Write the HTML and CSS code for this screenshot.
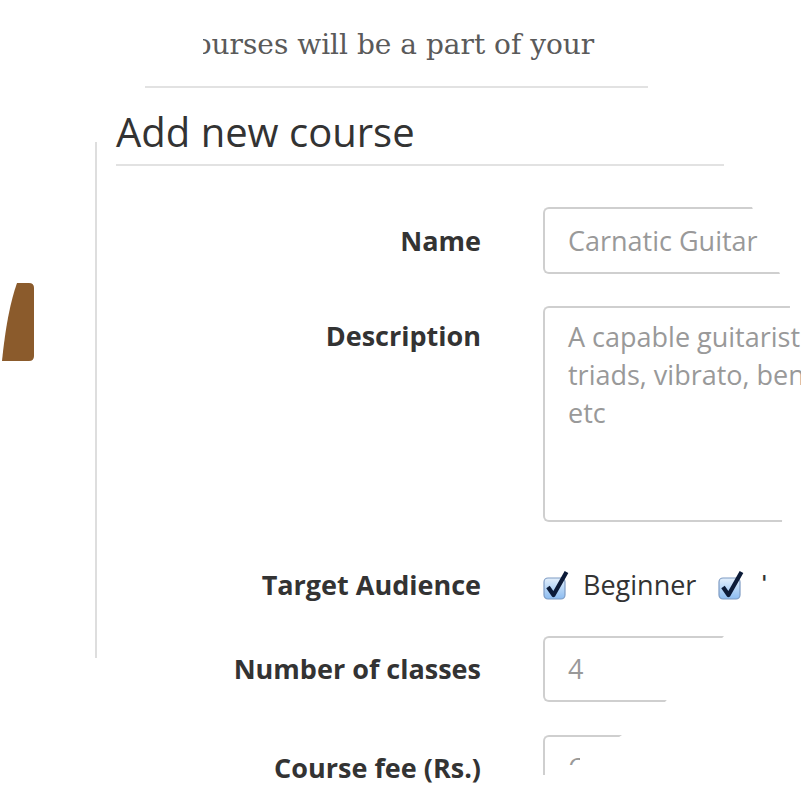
FILE: index.html
```html
<!DOCTYPE html>
<html lang="en">
<head>
<meta charset="utf-8">
<title>Add new course</title>
<link rel="stylesheet" href="styles.css">
</head>
<body>
<div class="page">
  <div class="intro">
    <div class="intro-clip"><p class="intro-text">courses will be a part of your curriculum</p></div>
    <div class="intro-rule"></div>
  </div>
  <div class="main">
    <div class="aside">
      <svg class="tab" width="36" height="80" viewBox="0 0 36 80" aria-hidden="true">
        <path d="M17 0 L29 0 Q34 0 34 5 L34 73 Q34 78 29 78 L2 78 Q7 28 17 0 Z" fill="#8b5b2c"/>
      </svg>
    </div>
    <div class="divider"></div>
    <div class="content">
      <h1 class="title">Add new course</h1>
      <div class="title-rule"></div>
      <form class="form">
        <div class="row row-name">
          <label class="label">Name</label>
          <div class="field field-name"><span class="value">Carnatic Guitar</span></div>
        </div>
        <div class="row row-desc">
          <label class="label">Description</label>
          <div class="field field-desc"><span class="value">A capable guitarist who can play
triads, vibrato, bends, slides
etc</span></div>
        </div>
        <div class="row row-aud">
          <label class="label">Target Audience</label>
          <div class="checks">
            <span class="check">
              <svg width="26" height="30" viewBox="0 0 26 30" aria-hidden="true">
                <defs>
                  <linearGradient id="cb1" x1="0" y1="0" x2="0" y2="1">
                    <stop offset="0" stop-color="#e4f0fc"/>
                    <stop offset="0.5" stop-color="#b6d5f6"/>
                    <stop offset="1" stop-color="#8cbcf0"/>
                  </linearGradient>
                </defs>
                <rect x="1" y="8" width="21" height="21" rx="4" fill="url(#cb1)" stroke="#7f9cc4" stroke-width="1.2"/>
                <path d="M5 17 L10.5 25 L23.5 2" fill="none" stroke="#0c1b38" stroke-width="4.2" stroke-linejoin="round"/>
              </svg>
              <span class="check-label">Beginner</span>
            </span>
            <span class="check">
              <svg width="26" height="30" viewBox="0 0 26 30" aria-hidden="true">
                <rect x="1" y="8" width="21" height="21" rx="4" fill="url(#cb1)" stroke="#7f9cc4" stroke-width="1.2"/>
                <path d="M5 17 L10.5 25 L23.5 2" fill="none" stroke="#0c1b38" stroke-width="4.2" stroke-linejoin="round"/>
              </svg>
              <span class="check-label check-cut">Intermediate</span>
            </span>
          </div>
        </div>
        <div class="row row-num">
          <label class="label">Number of classes</label>
          <div class="field field-num"><span class="value">4</span></div>
        </div>
        <div class="row row-fee">
          <label class="label">Course fee (Rs.)</label>
          <div class="field field-fee"><span class="value value-cut">600</span></div>
        </div>
      </form>
    </div>
  </div>
</div>
</body>
</html>
```

FILE: styles.css
```css
* { box-sizing: border-box; }
html, body { margin: 0; padding: 0; background: #fff; }
.page {
  position: relative;
  width: 801px;
  height: 801px;
  overflow: hidden;
  font-family: "Open Sans", "DejaVu Sans", sans-serif;
  color: #333;
}
.intro { height: 111px; }
.intro-clip {
  margin-left: 203px;
  width: 400px;
  padding-top: 28px;
  height: 62px;
  overflow: hidden;
}
.intro-text {
  margin: 0 0 0 -24px;
  font-family: "DejaVu Serif", serif;
  font-size: 28px;
  line-height: 34px;
  color: #5a5a5a;
  white-space: nowrap;
}
.intro-rule {
  margin: 24px 0 0 145px;
  width: 503px;
  height: 2px;
  background: #e2e2e2;
}
.main { display: flex; }
.aside { width: 95px; flex-shrink: 0; padding-top: 172px; }
.tab { display: block; }
.divider {
  flex-shrink: 0;
  width: 2px;
  height: 516px;
  margin-top: 31px;
  background: #dedede;
}
.content { margin-left: 19px; flex: 1; min-width: 0; }
.title {
  margin: 0;
  font-size: 40px;
  line-height: 42px;
  font-weight: 400;
  color: #333;
  white-space: nowrap;
}
.title-rule {
  margin-top: 11px;
  width: 608px;
  height: 2px;
  background: #e2e2e2;
}
.form { margin-top: 41px; }
.row {
  display: grid;
  grid-template-columns: 365px 1fr;
  column-gap: 62px;
  align-items: center;
}
.label {
  text-align: right;
  font-weight: 700;
  font-size: 27px;
  line-height: 36px;
  color: #333;
  white-space: nowrap;
}
.field {
  position: relative;
  height: 67px;
  padding-left: 25px;
  display: flex;
  align-items: center;
  font-size: 27px;
  color: #999;
}
.field::before {
  content: "";
  position: absolute;
  left: 0; top: 0; bottom: 0;
  width: 300px;
  border: 2px solid #cfcfcf;
  border-right: none;
  border-radius: 6px 0 0 6px;
}
.value { white-space: pre; line-height: 38px; }
.row-name { margin-bottom: 32px; }
.field-name::before { clip-path: polygon(0 0, 209px 0, 237px 100%, 0 100%); }
.row-desc { align-items: start; margin-bottom: 38px; }
.row-desc .label { padding-top: 12px; }
.field-desc {
  height: 216px;
  align-items: flex-start;
  padding-top: 12px;
}
.field-desc::before { clip-path: polygon(0 0, 247px 0, 239px 100%, 0 100%); }
.row-aud { height: 50px; margin-bottom: 26px; }
.checks { display: flex; align-items: center; }
.check { display: flex; align-items: center; }
.check svg { display: block; }
.check-label {
  margin-left: 14px;
  margin-right: 22px;
  font-size: 27px;
  line-height: 36px;
  color: #333;
}
.check-cut { margin-left: 16px; clip-path: inset(0 calc(100% - 7px) 62% 0); }
.row-num { margin-bottom: 33px; }
.field-num { height: 66px; }
.field-num::before { clip-path: polygon(0 0, 181px 0, 122px 100%, 0 100%); }
.field-fee { height: 66px; }
.field-fee::before { clip-path: polygon(0 0, 79px 0, 40px 27px, 2px 27px, 2px 40px, 0 40px); }
.value-cut { clip-path: inset(0 calc(100% - 12px) 58% 0); }
```
